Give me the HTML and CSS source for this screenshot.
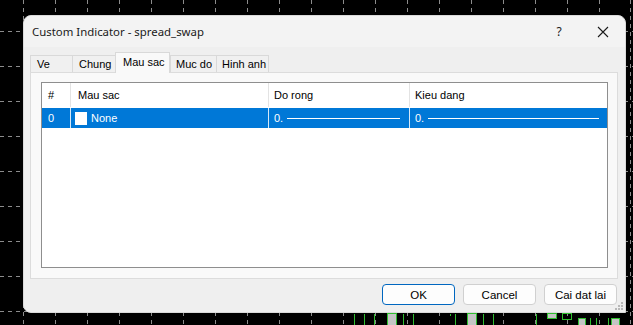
FILE: index.html
```html
<!DOCTYPE html>
<html>
<head>
<meta charset="utf-8">
<link rel="stylesheet" href="styles.css">
</head>
<body>
<div class="screen">
  <svg class="chart" width="633" height="325" viewBox="0 0 633 325">
    <g stroke="#8c8c8c" stroke-width="1" stroke-dasharray="4 4">
      <line x1="0" y1="31.5" x2="633" y2="31.5"/>
      <line x1="0" y1="66.5" x2="633" y2="66.5"/>
      <line x1="0" y1="101.5" x2="633" y2="101.5"/>
      <line x1="0" y1="136.5" x2="633" y2="136.5"/>
      <line x1="0" y1="171.5" x2="633" y2="171.5"/>
      <line x1="0" y1="206.5" x2="633" y2="206.5"/>
      <line x1="0" y1="241.5" x2="633" y2="241.5"/>
      <line x1="0" y1="276.5" x2="633" y2="276.5"/>
      <line x1="0" y1="311.5" x2="633" y2="311.5"/>
    </g>
    <g stroke="#8c8c8c" stroke-width="1" stroke-dasharray="4 4">
      <line x1="23.5" y1="0" x2="23.5" y2="325"/>
      <line x1="55.5" y1="0" x2="55.5" y2="325"/>
      <line x1="87.5" y1="0" x2="87.5" y2="325"/>
      <line x1="119.5" y1="0" x2="119.5" y2="325"/>
      <line x1="151.5" y1="0" x2="151.5" y2="325"/>
      <line x1="183.5" y1="0" x2="183.5" y2="325"/>
      <line x1="215.5" y1="0" x2="215.5" y2="325"/>
      <line x1="247.5" y1="0" x2="247.5" y2="325"/>
      <line x1="279.5" y1="0" x2="279.5" y2="325"/>
      <line x1="311.5" y1="0" x2="311.5" y2="325"/>
      <line x1="343.5" y1="0" x2="343.5" y2="325"/>
      <line x1="375.5" y1="0" x2="375.5" y2="325"/>
      <line x1="407.5" y1="0" x2="407.5" y2="325"/>
      <line x1="439.5" y1="0" x2="439.5" y2="325"/>
      <line x1="471.5" y1="0" x2="471.5" y2="325"/>
      <line x1="503.5" y1="0" x2="503.5" y2="325"/>
      <line x1="535.5" y1="0" x2="535.5" y2="325"/>
      <line x1="567.5" y1="0" x2="567.5" y2="325"/>
      <line x1="599.5" y1="0" x2="599.5" y2="325"/>
      <line x1="630.5" y1="0" x2="630.5" y2="325"/>
    </g>
    <g stroke="#2fbf2f" stroke-width="1">
      <line x1="354.5" y1="314" x2="354.5" y2="325"/>
      <line x1="364.5" y1="314" x2="364.5" y2="325"/>
      <line x1="374.5" y1="314" x2="374.5" y2="325"/>
      <line x1="403.5" y1="314" x2="403.5" y2="325"/>
      <line x1="413.5" y1="314" x2="413.5" y2="325"/>
      <line x1="450.5" y1="314" x2="450.5" y2="316"/>
      <line x1="455.5" y1="314" x2="455.5" y2="325"/>
      <line x1="483.5" y1="314" x2="483.5" y2="325"/>
      <line x1="493.5" y1="314" x2="493.5" y2="325"/>
      <line x1="536.5" y1="314" x2="536.5" y2="325"/>
      <line x1="590.5" y1="318" x2="590.5" y2="325"/>
      <line x1="596.5" y1="318" x2="596.5" y2="325"/>
      <line x1="608.5" y1="318" x2="608.5" y2="325"/>
    </g>
    <g fill="#c4c4c4" stroke="#2fbf2f" stroke-width="1">
      <rect x="387.5" y="313.5" width="9" height="12"/>
      <rect x="467.5" y="313.5" width="9" height="12"/>
      <rect x="547.5" y="313.5" width="9" height="5"/>
      <rect x="578.5" y="318.5" width="7" height="7"/>
      <rect x="611.5" y="318.5" width="8" height="7"/>
    </g>
    <rect x="562.5" y="313.5" width="9" height="6" fill="none" stroke="#2fbf2f"/>
  </svg>

  <div class="dialog">
    <div class="titlebar">
      <span class="title">Custom Indicator - spread_swap</span>
      <span class="help">?</span>
      <span class="close">
        <svg width="12" height="12" viewBox="0 0 12 12"><path d="M1 1 L11 11 M11 1 L1 11" stroke="#1a1a1a" stroke-width="1.1" fill="none"/></svg>
      </span>
    </div>

    <div class="tabs">
      <div class="tab tab-ve">Ve</div>
      <div class="tab tab-chung">Chung</div>
      <div class="tab tab-active">Mau sac</div>
      <div class="tab tab-muc">Muc do</div>
      <div class="tab tab-hinh">Hinh anh</div>
    </div>

    <div class="panel">
      <div class="listview">
        <div class="lv-row lv-head">
          <div class="cell c-num">#</div>
          <div class="cell c-color">Mau sac</div>
          <div class="cell c-width">Do rong</div>
          <div class="cell c-style">Kieu dang</div>
        </div>
        <div class="lv-row lv-sel">
          <div class="cell c-num">0</div>
          <div class="cell c-color"><span class="swatch"></span>None</div>
          <div class="cell c-width">0.<span class="line"></span></div>
          <div class="cell c-style">0.<span class="line"></span></div>
        </div>
      </div>
    </div>

    <div class="buttons">
      <button class="btn btn-default">OK</button>
      <button class="btn">Cancel</button>
      <button class="btn">Cai dat lai</button>
    </div>

    <svg class="grip" width="8" height="8" viewBox="0 0 8 8">
      <g fill="#b8b8b8">
        <rect x="6" y="0" width="2" height="2"/>
        <rect x="3" y="3" width="2" height="2"/>
        <rect x="6" y="3" width="2" height="2"/>
        <rect x="0" y="6" width="2" height="2"/>
        <rect x="3" y="6" width="2" height="2"/>
        <rect x="6" y="6" width="2" height="2"/>
      </g>
    </svg>
  </div>
</div>
</body>
</html>
```

FILE: styles.css
```css
html, body {
  margin: 0;
  padding: 0;
  background: #000;
}

.screen {
  position: relative;
  width: 633px;
  height: 325px;
  overflow: hidden;
  background: #000;
}

.chart {
  position: absolute;
  left: 0;
  top: 0;
}

.dialog {
  position: absolute;
  left: 23px;
  top: 15px;
  width: 603px;
  height: 298px;
  box-sizing: border-box;
  background: #efefef;
  border-radius: 8px 8px 0 8px;
  border: 1px solid #dadada;
  display: flex;
  flex-direction: column;
  font-family: "Liberation Sans", Arial, sans-serif;
  font-size: 11px;
  color: #000;
}

.titlebar {
  height: 31px;
  display: flex;
  align-items: center;
  padding-left: 8px;
  background: #f3f3f3;
  border-radius: 8px 8px 0 0;
  font-family: "Noto Sans", "Open Sans", sans-serif;
  font-size: 11.4px;
  color: #1a1a1a;
}

.title {
  flex: 1;
}

.help {
  width: 16px;
  text-align: center;
  font-size: 12px;
  margin-right: 30px;
}

.close {
  width: 12px;
  height: 12px;
  display: flex;
  margin-right: 16px;
}

.tabs {
  display: flex;
  align-items: flex-end;
  height: 20px;
  margin-top: 5px;
  padding-left: 6px;
}

.tab {
  height: 17px;
  line-height: 17px;
  box-sizing: border-box;
  border: 1px solid #d9d9d9;
  border-bottom: none;
  border-right: none;
  background: #f0f0f0;
  padding-left: 6px;
  white-space: nowrap;
  overflow: hidden;
}

.tab-ve { width: 42px; }
.tab-chung { width: 43px; }
.tab-muc { width: 46px; padding-left: 5px; }
.tab-hinh { width: 53px; padding-left: 5px; border-right: 1px solid #d9d9d9; }

.tab-active {
  width: 55px;
  height: 21px;
  line-height: 18px;
  margin-bottom: -1px;
  background: #f9f9f9;
  border: 1px solid #d9d9d9;
  border-bottom: none;
  padding-left: 7px;
  position: relative;
  z-index: 1;
}

.panel {
  margin: 0 7px 0 6px;
  height: 207px;
  box-sizing: border-box;
  background: #f9f9f9;
  border: 1px solid #dcdcdc;
  padding: 9px 9px 10px 10px;
}

.listview {
  height: 100%;
  box-sizing: border-box;
  background: #fff;
  border: 1px solid #8e8e8e;
}

.lv-row {
  display: flex;
}

.lv-head {
  height: 24px;
  line-height: 24px;
}

.lv-sel {
  height: 20px;
  line-height: 20px;
  margin-top: 1px;
  background: #0078d7;
  color: #fff;
}

.cell {
  box-sizing: border-box;
  border-right: 1px solid #e3e3e3;
  display: flex;
  align-items: center;
  white-space: nowrap;
}

.lv-sel .cell {
  border-right-color: #d6e8f7;
}

.c-num { width: 29px; padding-left: 6px; }
.c-color { width: 198px; padding-left: 7px; }
.c-width { width: 141px; padding-left: 5px; }
.c-style { flex: 1; padding-left: 5px; border-right: none; }

.lv-sel .c-style { margin-right: 6px; }

.swatch {
  width: 12px;
  height: 13px;
  background: #fff;
  margin-right: 4px;
  margin-left: -3px;
}

.line {
  flex: 1;
  height: 1px;
  background: #fff;
  margin-left: 4px;
  margin-right: 9px;
}

.c-style .line {
  margin-right: 2px;
}

.buttons {
  display: flex;
  justify-content: flex-end;
  gap: 8px;
  margin-top: 5px;
  padding-right: 8px;
}

.btn {
  width: 73px;
  height: 21px;
  box-sizing: border-box;
  background: #fdfdfd;
  border: 1px solid #d0d0d0;
  border-radius: 4px;
  font-family: "Liberation Sans", Arial, sans-serif;
  font-size: 11.5px;
  color: #000;
  padding: 0;
}

.btn-default {
  border: 1px solid #0067c0;
}

.grip {
  position: absolute;
  right: 2px;
  bottom: 2px;
}
```
